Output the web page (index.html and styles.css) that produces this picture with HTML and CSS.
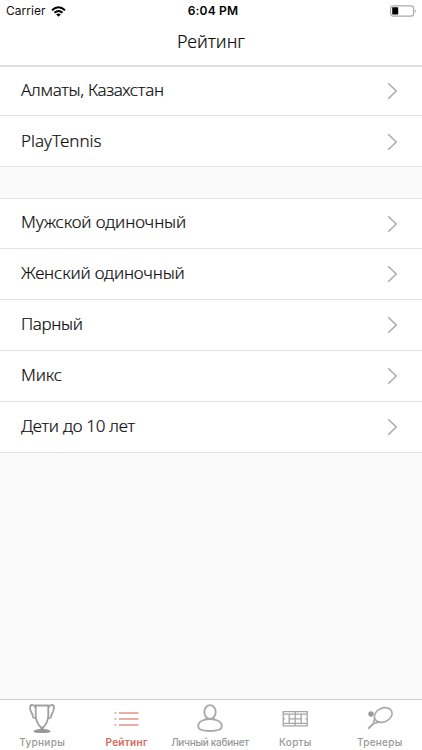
FILE: index.html
```html
<!DOCTYPE html>
<html lang="ru">
<head>
<meta charset="utf-8">
<title>Рейтинг</title>
<link rel="stylesheet" href="styles.css">
</head>
<body>
<svg class="defs" width="0" height="0"><defs><symbol id="chevron" viewBox="0 0 11 18"><path d="M1.2 1.2 9.2 9 1.2 16.8" fill="none" stroke="#aaa" stroke-width="1.5"/></symbol></defs></svg>
<header class="header">
  <div class="status">
    <div class="carrier"><span>Carrier</span>
      <svg width="15" height="11" viewBox="0 0 15 11"><g fill="none" stroke="#000" stroke-width="2"><path d="M1 4.3Q7.5-1.7 14 4.3"/><path d="M3.5 6.8Q7.5 3.2 11.5 6.8"/></g><path d="M5.2 8.4Q7.5 6.7 9.8 8.4L7.5 10.7Z"/></svg>
    </div>
    <div class="time">6:04 PM</div>
    <svg class="battery" width="28" height="12" viewBox="0 0 28 12"><rect x="1.6" y=".8" width="23" height="10.3" rx="2.5" fill="#fff" stroke="#aaa" stroke-width="1.2"/><rect x="3.2" y="2.3" width="6" height="7.3" rx=".5"/><path d="M25.8 4.2Q28 6 25.8 7.8Z" fill="#aaa"/></svg>
  </div>
  <h1 class="title">Рейтинг</h1>
</header>
<main class="content">
  <section class="list">
    <div class="row"><span class="city">Алматы, Казахстан</span><svg class="chev"><use href="#chevron"/></svg></div>
    <div class="row club"><span>PlayTennis</span><svg class="chev"><use href="#chevron"/></svg></div>
  </section>
  <section class="list categories">
    <div class="row"><span class="men">Мужской одиночный</span><svg class="chev"><use href="#chevron"/></svg></div>
    <div class="row"><span class="women">Женский одиночный</span><svg class="chev"><use href="#chevron"/></svg></div>
    <div class="row"><span class="pair">Парный</span><svg class="chev"><use href="#chevron"/></svg></div>
    <div class="row"><span class="mix">Микс</span><svg class="chev"><use href="#chevron"/></svg></div>
    <div class="row"><span class="kids">Дети до 10 лет</span><svg class="chev"><use href="#chevron"/></svg></div>
  </section>
</main>
<nav class="tabs">
  <div class="tab"><svg width="28" height="32" viewBox="0 0 28 32"><g fill="none" stroke="#a0a0a0" stroke-width="1.8"><path d="M7.7 2.5H20.3V13Q19.5 20.5 15 24.5H13Q8.5 20.5 7.7 13Z"/><path d="M7.5 4.5Q6 1.6 3.7 2Q1.6 2.4 2.2 6C2.7 10 4.5 9.5 4.7 13Q5 15.5 8 15M20.5 4.5Q22 1.6 24.3 2Q26.4 2.4 25.8 6C25.3 10 23.5 9.5 23.3 13Q23 15.5 20 15"/></g><path d="M12.5 24.5H15.5V26Q22.5 26.5 22.5 28.5Q22 30 14 30Q6 30 5.5 28.5Q5.5 26.5 12.5 26Z" fill="#999"/></svg><span>Турниры</span></div>
  <div class="tab active"><svg width="28" height="32" viewBox="0 0 28 32"><path d="M1.5 10H3.3M6 10H25.5M1.5 16H3.3M6 16H25.5M1.5 22H3.3M6 22H25.5" stroke="#e3948b" stroke-width="1.7"/></svg><span>Рейтинг</span></div>
  <div class="tab account"><svg width="28" height="32" viewBox="0 0 28 32"><g fill="none" stroke="#aaa" stroke-width="1.9"><ellipse cx="14" cy="9" rx="5.7" ry="6.9"/><path d="M10.5 15Q10.5 16.4 7.5 17.2Q2.2 18.8 2.2 23.5Q2.2 28 14 28Q25.8 28 25.8 23.5Q25.8 18.8 20.5 17.2Q17.5 16.4 17.5 15M7.5 17.2Q14 14.8 20.5 17.2"/></g></svg><span>Личный кабинет</span></div>
  <div class="tab"><svg width="28" height="32" viewBox="0 0 28 32"><path d="M2.2 8.7H26.2V22.8H2.2ZM2.2 11.2H26.2M2.2 20.3H26.2M14.2 8.7V22.8M8.2 11.2V20.3M20.2 11.2V20.3M8.2 15.8H20.2M2.2 15.8H4M24.4 15.8H26.2" fill="none" stroke="#a6a6a6" stroke-width="1.3"/></svg><span>Корты</span></div>
  <div class="tab"><svg width="28" height="32" viewBox="0 0 28 32"><circle cx="5" cy="11" r="2.7" fill="#999"/><g fill="none" stroke="#aaa" stroke-width="1.6"><ellipse cx="17.2" cy="12" rx="9.3" ry="6.8" transform="rotate(-25 17.2 12)"/><path d="M8.7 14.5 7.5 20.5 14.3 19"/><path d="M7.8 20.2 2.2 25.8" stroke-width="2"/></g></svg><span>Тренеры</span></div>
</nav>
</body>
</html>
```
FILE: styles.css
```css
* { box-sizing: border-box; }
body {
  margin: 0;
  width: 422px;
  height: 750px;
  overflow: hidden;
  display: flex;
  flex-direction: column;
  background: #fafafa;
  color: #111;
  font-family: "Noto Sans", sans-serif;
}
.defs { position: absolute; }
.header { height: 67px; background: #fff; border-bottom: 2px solid #e0e0e0; }
.status {
  height: 22px;
  padding: 0 5px 0 6px;
  display: grid;
  grid-template-columns: 1fr auto 1fr;
  align-items: center;
  font: 12px/22px Inter, sans-serif;
}
.carrier { display: flex; align-items: center; gap: 5px; letter-spacing: .05px; }
.time { padding-left: 3px; font-weight: 600; letter-spacing: .2px; color: #000; }
.battery { justify-self: end; }
.title {
  margin: 6px 0 0;
  font-size: 18px;
  font-weight: 300;
  line-height: 27px;
  text-align: center;
  -webkit-text-stroke: .2px #111;
}
.content { flex: 1; }
.list { background: #fff; }
.categories { margin-top: 31px; border-top: 1px solid #e2e2e2; }
.row {
  height: 51px;
  padding: 0 24px 3px 21px;
  display: flex;
  align-items: center;
  justify-content: space-between;
  border-bottom: 1px solid #e2e2e2;
  font-size: 17px;
  font-weight: 300;
  line-height: 24px;
  white-space: nowrap;
  -webkit-text-stroke: .2px #111;
}
.list:first-child .row:first-child { height: 49px; }
.categories .row:first-child { height: 50px; }
.row.club { padding-bottom: 1px; }
.city { letter-spacing: -.3px; }
.men { letter-spacing: -.12px; }
.women { letter-spacing: -.18px; }
.pair { letter-spacing: -.35px; }
.mix { letter-spacing: -.15px; }
.kids { letter-spacing: -.27px; }
.chev { width: 11px; height: 18px; margin-top: 3px; }
.tabs {
  height: 51px;
  display: grid;
  grid-template-columns: repeat(5, 1fr);
  border-top: 1px solid #ccc;
  background: #fff;
}
.tab {
  display: flex;
  flex-direction: column;
  align-items: center;
  padding-top: 3px;
  color: #999;
  font: 500 10px/15px Inter, sans-serif;
  letter-spacing: .3px;
  white-space: nowrap;
}
.account { letter-spacing: -.28px; padding-right: 2px; }
.active { color: #da6559; font-weight: 600; }
```
